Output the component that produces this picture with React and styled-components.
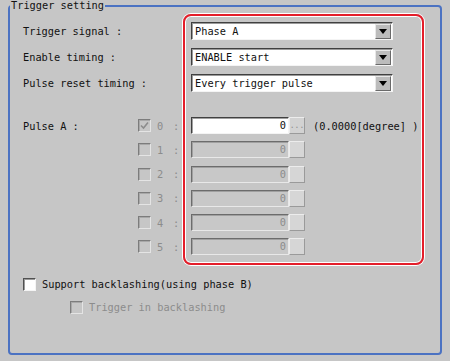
import React from "react";
import styled, { createGlobalStyle } from "styled-components";

const GlobalStyle = createGlobalStyle`
  body {
    margin: 0;
    background: #c6c6c6;
    font-family: "DejaVu Sans Mono", "Liberation Mono", monospace;
    font-size: 10.3px;
    color: #111;
  }
`;

const pulses = [0, 1, 2, 3, 4, 5];

function Check() {
  return (
    <svg width="11" height="11" viewBox="0 0 11 11">
      <path d="M2 5.5 L4.5 8 L9 2.5" fill="none" stroke="#8c8c8c" strokeWidth="1.6" />
    </svg>
  );
}

function Arrow() {
  return (
    <svg width="8" height="5" viewBox="0 0 8 5">
      <path d="M0 0 H8 L4 5 Z" fill="#000" />
    </svg>
  );
}

function App() {
  return (
    <Page>
      <GlobalStyle />
      <Frame>
        <Legend>Trigger setting</Legend>
        <Top>
          <LeftCol>
            <LabelRow>Trigger signal :</LabelRow>
            <LabelRow>Enable timing :</LabelRow>
            <LabelRow>Pulse reset timing :</LabelRow>
            <Spacer />
            {pulses.map(n => (
              <PulseLabelRow key={n}>
                <PulseName>{n === 0 ? "Pulse A :" : ""}</PulseName>
                <Box disabled>{n === 0 && <Check />}</Box>
                <Num>{n}</Num>
                <Colon>:</Colon>
              </PulseLabelRow>
            ))}
          </LeftCol>
          <RedBox>
            <Select>
              <SelectText>Phase A</SelectText>
              <SelectBtn><Arrow /></SelectBtn>
            </Select>
            <Select>
              <SelectText>ENABLE start</SelectText>
              <SelectBtn><Arrow /></SelectBtn>
            </Select>
            <Select>
              <SelectText>Every trigger pulse</SelectText>
              <SelectBtn><Arrow /></SelectBtn>
            </Select>
            <Spacer />
            {pulses.map(n => (
              <PulseRow key={n}>
                <Field active={n === 0}>0</Field>
                <DotBtn active={n === 0}>{n === 0 ? "..." : ""}</DotBtn>
                {n === 0 && <Unit>(0.0000[degree] )</Unit>}
              </PulseRow>
            ))}
          </RedBox>
        </Top>
        <OptionRow>
          <Box />
          <OptionText>Support backlashing(using phase B)</OptionText>
        </OptionRow>
        <OptionRow indent>
          <Box disabled />
          <OptionText disabled>Trigger in backlashing</OptionText>
        </OptionRow>
      </Frame>
    </Page>
  );
}

const Page = styled.div`
  width: 450px;
  height: 361px;
  box-sizing: border-box;
  padding: 0 8px 6px 8px;
  display: flex;
  flex-direction: column;
`;

const Frame = styled.fieldset`
  flex: 1;
  margin: 0;
  padding: 0 16px 0 0;
  min-width: 0;
  border: 2px solid #4b72c2;
  border-radius: 4px;
`;

const Legend = styled.legend`
  padding: 0 1px;
  margin-left: 0;
  line-height: 11px;
`;

const Top = styled.div`
  display: flex;
  align-items: flex-start;
  margin-top: 3px;
`;

const LeftCol = styled.div`
  width: 173px;
  flex: none;
  box-sizing: border-box;
  padding: 8px 0 0 13px;
  display: flex;
  flex-direction: column;
`;

const LabelRow = styled.div`
  height: 18px;
  margin-bottom: 8px;
  display: flex;
  align-items: center;
`;

const Spacer = styled.div`
  height: 17px;
`;

const PulseLabelRow = styled.div`
  height: 17px;
  margin-bottom: 7.25px;
  display: flex;
  align-items: center;
`;

const PulseName = styled.div`
  width: 115px;
  flex: none;
`;

const Box = styled.div`
  width: 13px;
  height: 13px;
  box-sizing: border-box;
  flex: none;
  display: flex;
  align-items: center;
  justify-content: center;
  border: 1px solid;
  border-color: ${p => (p.disabled ? "#7c7c7c #e4e4e4 #e4e4e4 #7c7c7c" : "#505050 #f4f4f4 #f4f4f4 #505050")};
  box-shadow: inset 1px 1px 0 ${p => (p.disabled ? "#a8a8a8" : "#9a9a9a")};
  background: ${p => (p.disabled ? "#c6c6c6" : "#fff")};
`;

const Num = styled.span`
  color: #8c8c8c;
  margin-left: 6px;
  width: 10px;
  flex: none;
`;

const Colon = styled.span`
  color: #8c8c8c;
  margin-left: 6px;
`;

const RedBox = styled.div`
  width: 241px;
  flex: none;
  box-sizing: border-box;
  padding: 6px 29px 8px 6px;
  border: 2px solid #e41e2a;
  border-radius: 8px;
  box-shadow: 0 0 0 1px #fff, inset 0 0 0 1px #fff;
  display: flex;
  flex-direction: column;
`;

const Select = styled.div`
  height: 18px;
  margin-bottom: 8px;
  box-sizing: border-box;
  display: flex;
  align-items: center;
  background: #fff;
  border: 1px solid;
  border-color: #404040 #f4f4f4 #f4f4f4 #404040;
  box-shadow: inset 1px 1px 0 #9a9a9a;
`;

const SelectText = styled.span`
  flex: 1;
  padding-left: 3px;
`;

const SelectBtn = styled.div`
  width: 16px;
  height: 15px;
  margin-right: 1px;
  box-sizing: border-box;
  display: flex;
  align-items: center;
  justify-content: center;
  background: #bcbcbc;
  border: 1px solid;
  border-color: #e8e8e8 #6a6a6a #6a6a6a #e8e8e8;
`;

const PulseRow = styled.div`
  height: 17px;
  margin-bottom: 7.25px;
  display: flex;
  align-items: center;
  &:last-child {
    margin-bottom: 0;
  }
`;

const Field = styled.div`
  width: 98px;
  height: 17px;
  flex: none;
  box-sizing: border-box;
  padding-right: 2px;
  text-align: right;
  line-height: 15px;
  background: ${p => (p.active ? "#fff" : "#c8c8c8")};
  color: ${p => (p.active ? "#111" : "#8c8c8c")};
  border: 1px solid;
  border-color: ${p => (p.active ? "#404040 #f4f4f4 #f4f4f4 #404040" : "#6c6c6c #e8e8e8 #e8e8e8 #6c6c6c")};
  box-shadow: inset 1px 1px 0 #a0a0a0;
`;

const DotBtn = styled.div`
  width: 16px;
  height: 17px;
  flex: none;
  box-sizing: border-box;
  display: flex;
  align-items: center;
  justify-content: center;
  font-size: 8px;
  color: #8c8c8c;
  background: ${p => (p.active ? "#d2d2d2" : "#d6d6d6")};
  border: 1px solid;
  border-color: #ececec #9a9a9a #9a9a9a #ececec;
`;

const Unit = styled.span`
  margin-left: 8px;
  flex: none;
  white-space: nowrap;
`;

const OptionRow = styled.div`
  display: flex;
  align-items: center;
  height: 13px;
  padding-left: ${p => (p.indent ? "60px" : "13px")};
  margin-top: ${p => (p.indent ? "10px" : "12.5px")};
`;

const OptionText = styled.span`
  margin-left: 6px;
  color: ${p => (p.disabled ? "#8c8c8c" : "#111")};
`;

export default App;
